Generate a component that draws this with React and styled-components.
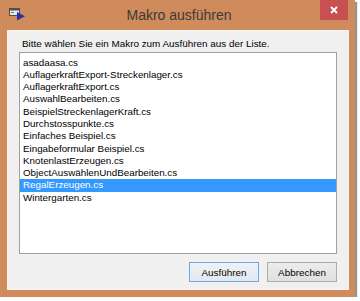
import React from "react";
import styled, { createGlobalStyle } from "styled-components";

const Global = createGlobalStyle`
  html, body { margin: 0; padding: 0; background: #ffffff; }
  body { font-family: "Liberation Sans", Arial, sans-serif; }
`;

const Window = styled.div`
  width: 355px;
  height: 297px;
  background: #cf8b5b;
  display: flex;
  flex-direction: column;
  box-shadow: 2px 2px 1px rgba(60, 60, 60, 0.55);
`;

const TitleBar = styled.div`
  height: 30px;
  flex: none;
  display: grid;
  grid-template-columns: 1fr auto 1fr;
  align-items: start;
`;

const AppIcon = styled.svg`
  justify-self: start;
  margin: 7px 0 0 9px;
`;

const Title = styled.div`
  font-family: "Liberation Sans", Arial, sans-serif;
  font-size: 14px;
  line-height: 30px;
  color: #3a3a3a;
  padding-left: 3px;
`;

const CloseButton = styled.div`
  justify-self: end;
  margin-right: 7px;
  width: 28px;
  height: 20px;
  background: #c75050;
  display: flex;
  align-items: center;
  justify-content: center;
`;

const Client = styled.div`
  flex: 1;
  margin: 0 6px 7px 7px;
  background: #f0f0f0;
  box-shadow: inset 0 0 0 1px #f7f3ef;
  display: flex;
  flex-direction: column;
  font-size: 9.9px;
  color: #000;
`;

const Label = styled.div`
  padding: 7px 0 0 15px;
  line-height: 13px;
  white-space: nowrap;
`;

const List = styled.div`
  margin: 2px 0 0 12px;
  width: 318px;
  height: 202px;
  box-sizing: border-box;
  border: 1px solid #a0a0a0;
  background: #ffffff;
  padding-top: 3.5px;
  font-size: 9.8px;
`;

const Item = styled.div`
  height: 12.3px;
  line-height: 12.3px;
  padding-left: 3px;
  white-space: nowrap;
  background: ${(p) => (p.$selected ? "#3399ff" : "transparent")};
  color: ${(p) => (p.$selected ? "#ffffff" : "#000000")};
`;

const ButtonRow = styled.div`
  display: flex;
  justify-content: flex-end;
  gap: 8px;
  padding: 8px 12px 0 0;
`;

const Button = styled.div`
  width: 70px;
  height: 20px;
  box-sizing: border-box;
  border: 1px solid ${(p) => (p.$default ? "#6aa9e6" : "#acacac")};
  background: ${(p) =>
    p.$default
      ? "linear-gradient(#eef3f8, #e3e8ee)"
      : "linear-gradient(#ececec, #e0e0e0)"};
  display: flex;
  align-items: center;
  justify-content: center;
  font-size: 9.9px;
  color: #000;
`;

const items = [
  "asadaasa.cs",
  "AuflagerkraftExport-Streckenlager.cs",
  "AuflagerkraftExport.cs",
  "AuswahlBearbeiten.cs",
  "BeispielStreckenlagerKraft.cs",
  "Durchstosspunkte.cs",
  "Einfaches Beispiel.cs",
  "Eingabeformular Beispiel.cs",
  "KnotenlastErzeugen.cs",
  "ObjectAuswählenUndBearbeiten.cs",
  "RegalErzeugen.cs",
  "Wintergarten.cs",
];

export default function App() {
  return (
    <>
      <Global />
      <Window>
        <TitleBar>
          <AppIcon width="18" height="14" viewBox="0 0 18 14">
            <rect x="0.5" y="1.5" width="10" height="7" fill="#e8e8e8" stroke="#505050" />
            <rect x="1" y="2" width="9" height="1.5" fill="#505050" />
            <rect x="2" y="5" width="3" height="1" fill="#707070" />
            <polygon points="8,5 8,13.5 16,9.25" fill="#2b2fa8" />
          </AppIcon>
          <Title>Makro ausführen</Title>
          <CloseButton>
            <svg width="8" height="8" viewBox="0 0 8 8">
              <path d="M1 1 L7 7 M7 1 L1 7" stroke="#ffffff" strokeWidth="1.8" />
            </svg>
          </CloseButton>
        </TitleBar>
        <Client>
          <Label>Bitte wählen Sie ein Makro zum Ausführen aus der Liste.</Label>
          <List>
            {items.map((it) => (
              <Item key={it} $selected={it === "RegalErzeugen.cs"}>
                {it}
              </Item>
            ))}
          </List>
          <ButtonRow>
            <Button $default>Ausführen</Button>
            <Button>Abbrechen</Button>
          </ButtonRow>
        </Client>
      </Window>
    </>
  );
}
